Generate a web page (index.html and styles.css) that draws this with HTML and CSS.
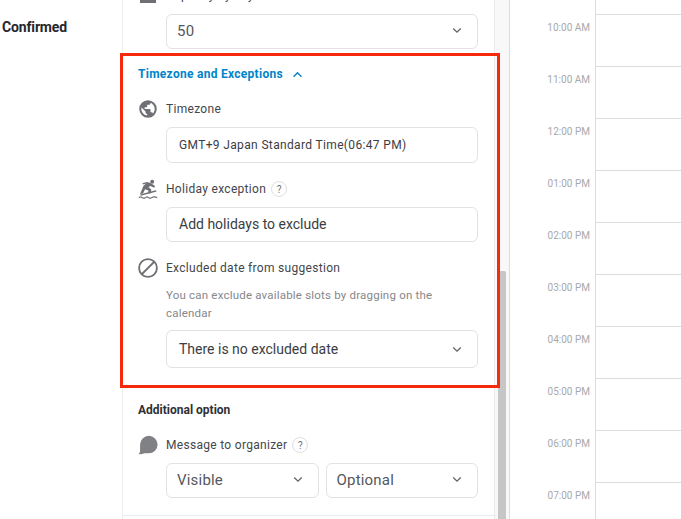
FILE: index.html
```html
<!DOCTYPE html>
<html lang="en">
<head>
<meta charset="utf-8">
<title>Scheduling settings</title>
<link rel="stylesheet" href="styles.css">
</head>
<body>
<div class="app">
  <aside class="status"><span class="status-label">Confirmed</span></aside>
  <section class="panel">
    <div class="panel-inner">
      <div class="top-row">
        <svg class="icon top-icon" viewBox="0 0 20 20"><path d="M2 0h16v12H2z" fill="#6f7075"/><path d="M5 14.500h4v2H5z" fill="#fff"/></svg>
        <span class="field-label cut">Capacity by day</span>
      </div>
      <div class="control select first"><span class="value-large">50</span><svg class="chev" viewBox="0 0 12 8"><path d="M1.500 1.500 6 6l4.500-4.500" /></svg></div>

      <div class="section-head">
        <span class="section-title">Timezone and Exceptions</span>
        <svg class="chev-up" viewBox="0 0 12 8"><path d="M1.500 6.500 6 2l4.500 4.500" /></svg>
      </div>

      <div class="field-row tz-row">
        <svg class="icon" viewBox="0 0 24 24"><path fill="#6f7075" d="M12 1.500a10.500 10.500 0 1 0 0 21 10.500 10.500 0 0 0 0-21zm-1 18.400A8 8 0 0 1 4.200 10.200L9 15v1c0 1.100.9 2 2 2v1.900zm6.900-2.500A2 2 0 0 0 16 16h-1v-3a1 1 0 0 0-1-1H8v-2h2a1 1 0 0 0 1-1V7h2a2 2 0 0 0 2-2v-.4a8 8 0 0 1 2.900 12.800z"/></svg>
        <span class="field-label">Timezone</span>
      </div>
      <div class="control tz"><span class="value-small">GMT+9 Japan Standard Time(06:47 PM)</span></div>

      <div class="field-row holiday-row">
        <svg class="icon" viewBox="0 0 24 24"><g fill="#6f7075"><circle cx="17" cy="3.200" r="2.400"/><path d="M3.500 5.500 11 3.500l4.500 1.500 5 3.500-1.200 2-4.300-2-2.500 1.200 3.500 3-.8 4.300h-3.200l.5-3.300-4-1.500-2.500 5.300-3.500.5 4-9.500 3-3-3.300 1-.7-1.500z"/><path d="M21 13.500l1.500 1.500L3.500 20l-1-1.500z"/><path d="M1 21.500c1.500-1 2.500-1 4 0s2.500 1 4 0 2.500-1 3.500 0 2.500 1 4 0 2.500-1 6.500 0v1.500c-3.500-1-5-1-6.500 0s-2.500 1-4 0-2-1-3.500 0-2.500 1-4 0-2.500-1-4 0z"/></g></svg>
        <span class="field-label">Holiday exception</span>
        <span class="help">?</span>
      </div>
      <div class="control holiday"><span class="value-mid">Add holidays to exclude</span></div>

      <div class="field-row excluded-row">
        <svg class="icon icon-ban" viewBox="0 0 24 24"><circle cx="12" cy="12" r="10.700" fill="none" stroke="#6f7075" stroke-width="2.200"/><path d="M4.500 19.500 19.500 4.500" stroke="#6f7075" stroke-width="2.200"/></svg>
        <span class="field-label">Excluded date from suggestion</span>
      </div>
      <p class="hint">You can exclude available slots by dragging on the calendar</p>
      <div class="control select excluded"><span class="value-mid">There is no excluded date</span><svg class="chev" viewBox="0 0 12 8"><path d="M1.500 1.500 6 6l4.500-4.500" /></svg></div>

      <h3 class="add-title">Additional option</h3>
      <div class="field-row message-row">
        <svg class="icon icon-msg" viewBox="0 0 24 24"><path fill="#808185" d="M13 1a10.500 10.500 0 0 1 0 21H7.500c-2 1-4.500 1.300-7 1 1.500-1.300 2-2.800 2-4.500V11.500A10.500 10.500 0 0 1 13 1z"/></svg>
        <span class="field-label">Message to organizer</span>
        <span class="help">?</span>
      </div>
      <div class="select-pair">
        <div class="control select half"><span class="value-large">Visible</span><svg class="chev" viewBox="0 0 12 8"><path d="M1.500 1.500 6 6l4.500-4.500" /></svg></div>
        <div class="control select half"><span class="value-large">Optional</span><svg class="chev" viewBox="0 0 12 8"><path d="M1.500 1.500 6 6l4.500-4.500" /></svg></div>
      </div>
      <div class="panel-end"></div>
    </div>
    <div class="highlight"></div>
  </section>
  <div class="scrolltrack"><div class="scrollthumb"></div></div>
  <section class="calendar">
    <div class="hour first-hour"><span class="time"></span><span class="slot"></span></div>
    <div class="hour"><span class="time">10:00 AM</span><span class="slot"></span></div>
    <div class="hour"><span class="time">11:00 AM</span><span class="slot"></span></div>
    <div class="hour"><span class="time">12:00 PM</span><span class="slot"></span></div>
    <div class="hour"><span class="time">01:00 PM</span><span class="slot"></span></div>
    <div class="hour"><span class="time">02:00 PM</span><span class="slot"></span></div>
    <div class="hour"><span class="time">03:00 PM</span><span class="slot"></span></div>
    <div class="hour"><span class="time">04:00 PM</span><span class="slot"></span></div>
    <div class="hour"><span class="time">05:00 PM</span><span class="slot"></span></div>
    <div class="hour"><span class="time">06:00 PM</span><span class="slot"></span></div>
    <div class="hour"><span class="time">07:00 PM</span><span class="slot"></span></div>
  </section>
</div>
</body>
</html>
```
FILE: styles.css
```css
* { box-sizing: border-box; }
html, body { margin: 0; height: 100%; overflow: hidden; background: #fff; }
body { font-family: Roboto, "Liberation Sans", sans-serif; color: #35373c; }
.app { display: flex; width: 681px; height: 519px; overflow: hidden; }
.status { width: 122px; flex: none; padding: 17px 0 0 2px; }
.status-label { font-size: 14px; line-height: 18px; font-weight: 700; color: #25272b; letter-spacing: -0.15px; }
.panel { position: relative; z-index: 2; width: 373px; flex: none; border-left: 1px solid #eeeeef; border-right: 1px solid #e9e9ea; height: 519px; }
.panel-inner { padding: 0 16px 0 15px; height: 519px; overflow: hidden; }
.top-row { display: flex; align-items: flex-start; height: 14px; overflow: hidden; }
.top-icon { margin-top: -9px; }
.icon { width: 20px; height: 20px; flex: none; }
.cut { margin-top: -12px; margin-left: 8px; }
.control { display: flex; align-items: center; margin-left: 28px; border: 1px solid #e2e2e4; border-radius: 6px; background: #fff; padding-left: 10px; padding-right: 15px; }
.select { justify-content: space-between; }
.first { height: 35px; padding-bottom: 2px; }
.tz { height: 36px; padding-left: 12px; }
.holiday { height: 35px; padding-left: 12px; padding-bottom: 1px; }
.excluded { height: 38px; padding-left: 12px; }
.value-large { font-size: 15px; color: #55575c; letter-spacing: 0.2px; }
.value-mid { font-size: 14px; color: #3b3d42; letter-spacing: 0; }
.value-small { font-size: 12px; color: #3b3d42; letter-spacing: 0.35px; }
.chev, .chev-up { height: 7px; flex: none; fill: none; stroke-width: 1.600; }
.chev { width: 10px; stroke: #63656a; }
.chev-up { width: 11px; stroke: #0084c8; margin-left: 9px; }
.section-head { display: flex; align-items: center; height: 18px; margin-top: 16px; }
.section-title { font-size: 12px; font-weight: 700; color: #0084c8; letter-spacing: 0.28px; }
.field-row { display: flex; align-items: center; height: 20px; }
.field-label { font-size: 12px; color: #44464b; letter-spacing: 0.3px; margin-left: 8px; white-space: nowrap; }
.tz-row { margin-top: 16px; margin-bottom: 8px; }
.holiday-row { margin-top: 16px; margin-bottom: 8px; }
.excluded-row { margin-top: 16px; }
.help { display: flex; align-items: center; justify-content: center; width: 16px; height: 16px; margin-left: 5px; border: 1px solid #dfdfe1; border-radius: 50%; font-size: 10px; color: #6f7075; }
.hint { margin: 8px 0 8px 28px; font-size: 11.500px; line-height: 18px; color: #85878b; letter-spacing: 0.2px; }
.add-title { margin: 34px 0 0; font-size: 12px; line-height: 16px; font-weight: 700; color: #2e3035; }
.message-row { margin-top: 17px; margin-bottom: 8px; }
.select-pair { display: flex; gap: 7px; margin-left: 28px; }
.half { flex: 1 1 0; height: 35px; margin-left: 0; padding-bottom: 2px; }
.panel-end { border-top: 1px solid #ececed; margin: 17px -16px 0 -15px; }
.highlight { position: absolute; left: -3px; top: 53px; width: 380px; height: 335px; border: 3px solid #f42a0b; pointer-events: none; }
.scrolltrack { position: relative; width: 14px; flex: none; background: #f8f8f8; }
.scrollthumb { position: absolute; left: 3px; top: 271px; bottom: 0; width: 8px; background: #c6c6c6; border-radius: 2px 2px 0 0; }
.calendar { flex: 1; border-left: 1px solid #dcdcde; }
.hour { display: flex; height: 52px; }
.first-hour { height: 15px; }
.time { width: 85px; flex: none; text-align: right; padding: 7px 5px 0 0; font-size: 10px; line-height: 12px; color: #a8a9ac; letter-spacing: 0; }
.slot { flex: 1; border-left: 1px solid #dcdcde; border-bottom: 1px solid #dcdcde; }
```
